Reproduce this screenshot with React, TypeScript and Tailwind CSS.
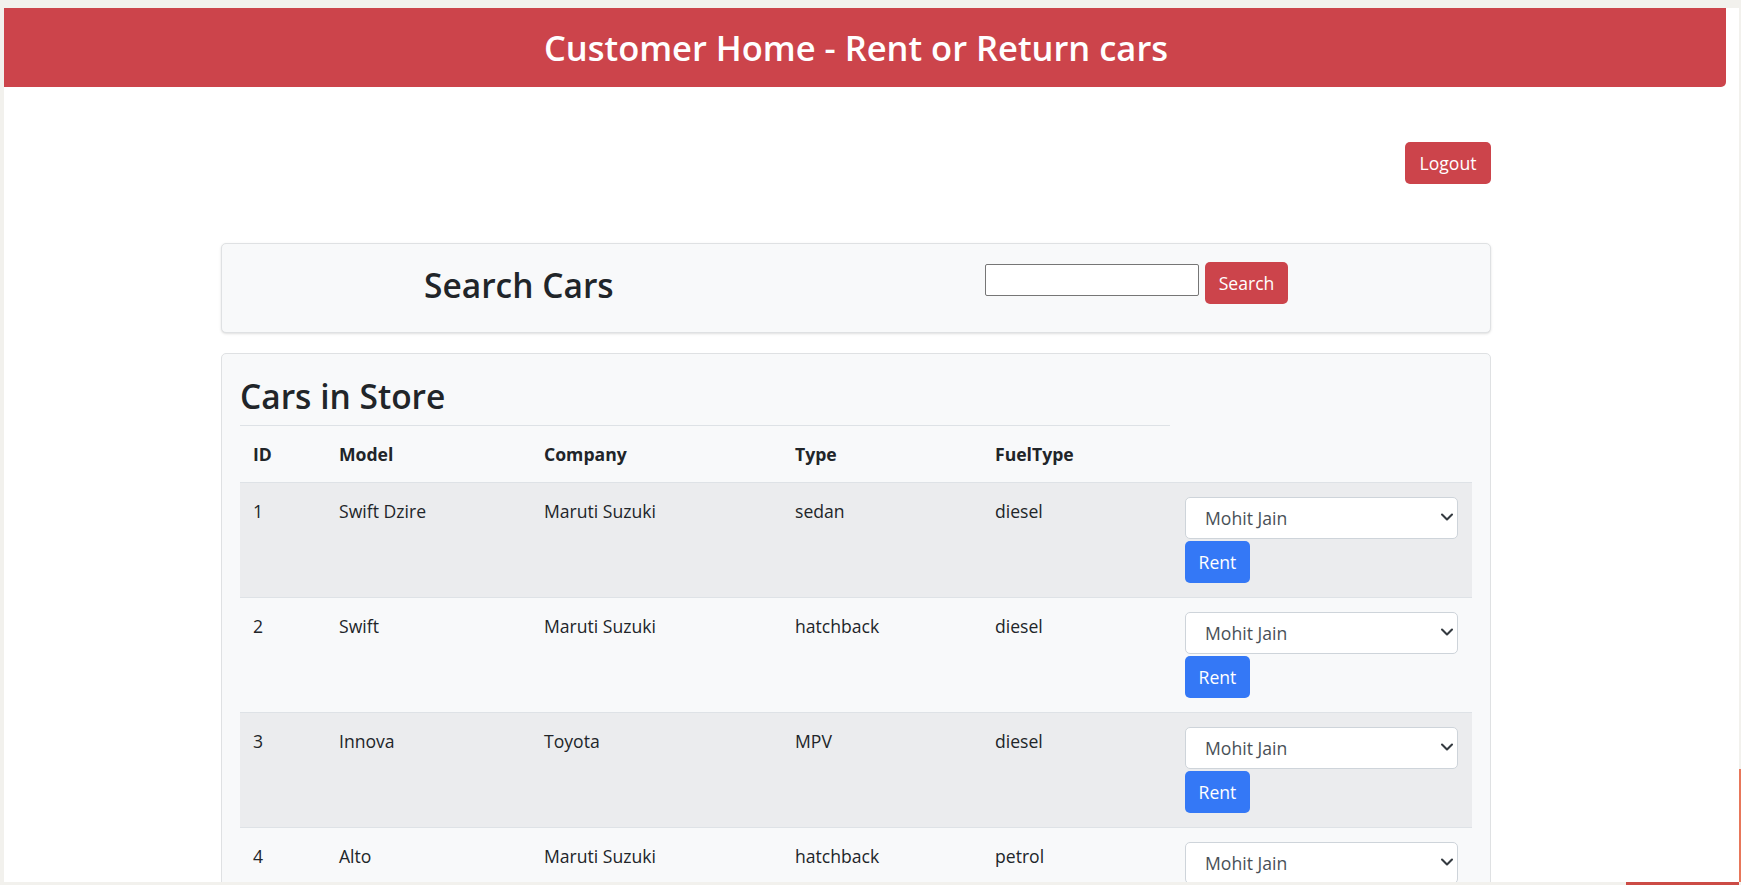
import { ChevronDown } from "lucide-react";

const cars = [
  { id: 1, model: "Swift Dzire", company: "Maruti Suzuki", type: "sedan", fuel: "diesel" },
  { id: 2, model: "Swift", company: "Maruti Suzuki", type: "hatchback", fuel: "diesel" },
  { id: 3, model: "Innova", company: "Toyota", type: "MPV", fuel: "diesel" },
  { id: 4, model: "Alto", company: "Maruti Suzuki", type: "hatchback", fuel: "petrol" },
];

function RentCell() {
  return (
    <td className="pt-[14px] pb-[14px] pl-[13px] pr-[14px] align-top">
      <div className="relative h-[42px] w-[273px] rounded-[5px] border border-[#ced4da] bg-white">
        <span className="absolute left-[19px] top-[7px] text-[17.6px] leading-[26px] text-[#495057]">
          Mohit Jain
        </span>
        <ChevronDown
          className="absolute right-0 top-[9px] h-[20px] w-[20px] text-[#343a40]"
          strokeWidth={2.5}
        />
      </div>
      <button className="mt-[2px] h-[42px] w-[65px] rounded-[5px] bg-[#3478f6] text-[17.6px] text-white">
        Rent
      </button>
    </td>
  );
}

export default function App() {
  return (
    <div
      className="relative h-[885px] w-[1741px] overflow-hidden bg-[#f2f1ed] pb-[3px] pl-[4px] pr-[2px] pt-[8px] text-[#212529]"
      style={{ fontFamily: '"Open Sans", "Noto Sans", sans-serif' }}
    >
      <div className="h-full overflow-hidden bg-white">
        {/* header */}
        <div className="flex h-[79px] w-[1722px] items-center justify-center rounded-br-[5px] bg-[#cc444b] pr-[18px] pt-[2px]">
          <h1 className="text-[34.5px] font-semibold leading-none text-white">
            Customer Home - Rent or Return cars
          </h1>
        </div>

        <div className="ml-[217px] w-[1270px]">
          <div className="mt-[55px] flex justify-end">
            <button className="h-[42px] w-[86px] rounded-[5px] bg-[#cc444b] text-[17.6px] text-white">
              Logout
            </button>
          </div>

          {/* search card */}
          <div className="mt-[59px] flex h-[90px] items-start rounded-[5px] border border-[#dfe1e3] bg-[#f8f9fa] shadow-sm">
            <div className="w-[763px] pl-[202px] pt-[17px]">
              <h2 className="text-[33.5px] font-semibold leading-[48px]">Search Cars</h2>
            </div>
            <input
              type="text"
              className="mt-[20px] h-[32px] w-[214px] rounded-[2px] border border-[#767676] bg-white"
            />
            <button className="ml-[6px] mt-[18px] h-[42px] w-[83px] rounded-[5px] bg-[#cc444b] text-[17.6px] text-white">
              Search
            </button>
          </div>

          {/* cars table */}
          <div className="mt-[20px] rounded-[5px] border border-[#dfe1e3] bg-[#f8f9fa] px-[18px] pt-[18px]">
            <div className="w-[930px] border-b border-[#dee2e6] pb-[5px]">
              <h2 className="text-[33.5px] font-semibold leading-[48px]">Cars in Store</h2>
            </div>
            <table className="w-[1232px] table-fixed border-collapse text-[17.6px] leading-[26px]">
              <colgroup>
                <col className="w-[86px]" />
                <col className="w-[205px]" />
                <col className="w-[251px]" />
                <col className="w-[200px]" />
                <col className="w-[190px]" />
                <col className="w-[300px]" />
              </colgroup>
              <thead>
                <tr className="h-[56px]">
                  <th className="px-[13px] pt-[15px] text-left align-top font-bold">ID</th>
                  <th className="px-[13px] pt-[15px] text-left align-top font-bold">Model</th>
                  <th className="px-[13px] pt-[15px] text-left align-top font-bold">Company</th>
                  <th className="px-[13px] pt-[15px] text-left align-top font-bold">Type</th>
                  <th className="px-[13px] pt-[15px] text-left align-top font-bold">FuelType</th>
                  <th />
                </tr>
              </thead>
              <tbody>
                {cars.map((c, i) => (
                  <tr
                    key={c.id}
                    className={
                      i % 2 === 0
                        ? "border-t border-[#dee2e6] bg-[#ebecee]"
                        : "border-t border-[#dee2e6] bg-[#f8f9fa]"
                    }
                  >
                    <td className="px-[13px] pt-[15px] align-top">{c.id}</td>
                    <td className="px-[13px] pt-[15px] align-top">{c.model}</td>
                    <td className="px-[13px] pt-[15px] align-top">{c.company}</td>
                    <td className="px-[13px] pt-[15px] align-top">{c.type}</td>
                    <td className="px-[13px] pt-[15px] align-top">{c.fuel}</td>
                    <RentCell />
                  </tr>
                ))}
              </tbody>
            </table>
          </div>
        </div>
      </div>

      {/* window edge artifacts */}
      <div className="absolute bottom-[3px] right-0 h-[113px] w-[2px] bg-[#e8775a]" />
      <div className="absolute bottom-0 right-[2px] h-[3px] w-[113px] bg-[#cc4b45]" />
    </div>
  );
}
